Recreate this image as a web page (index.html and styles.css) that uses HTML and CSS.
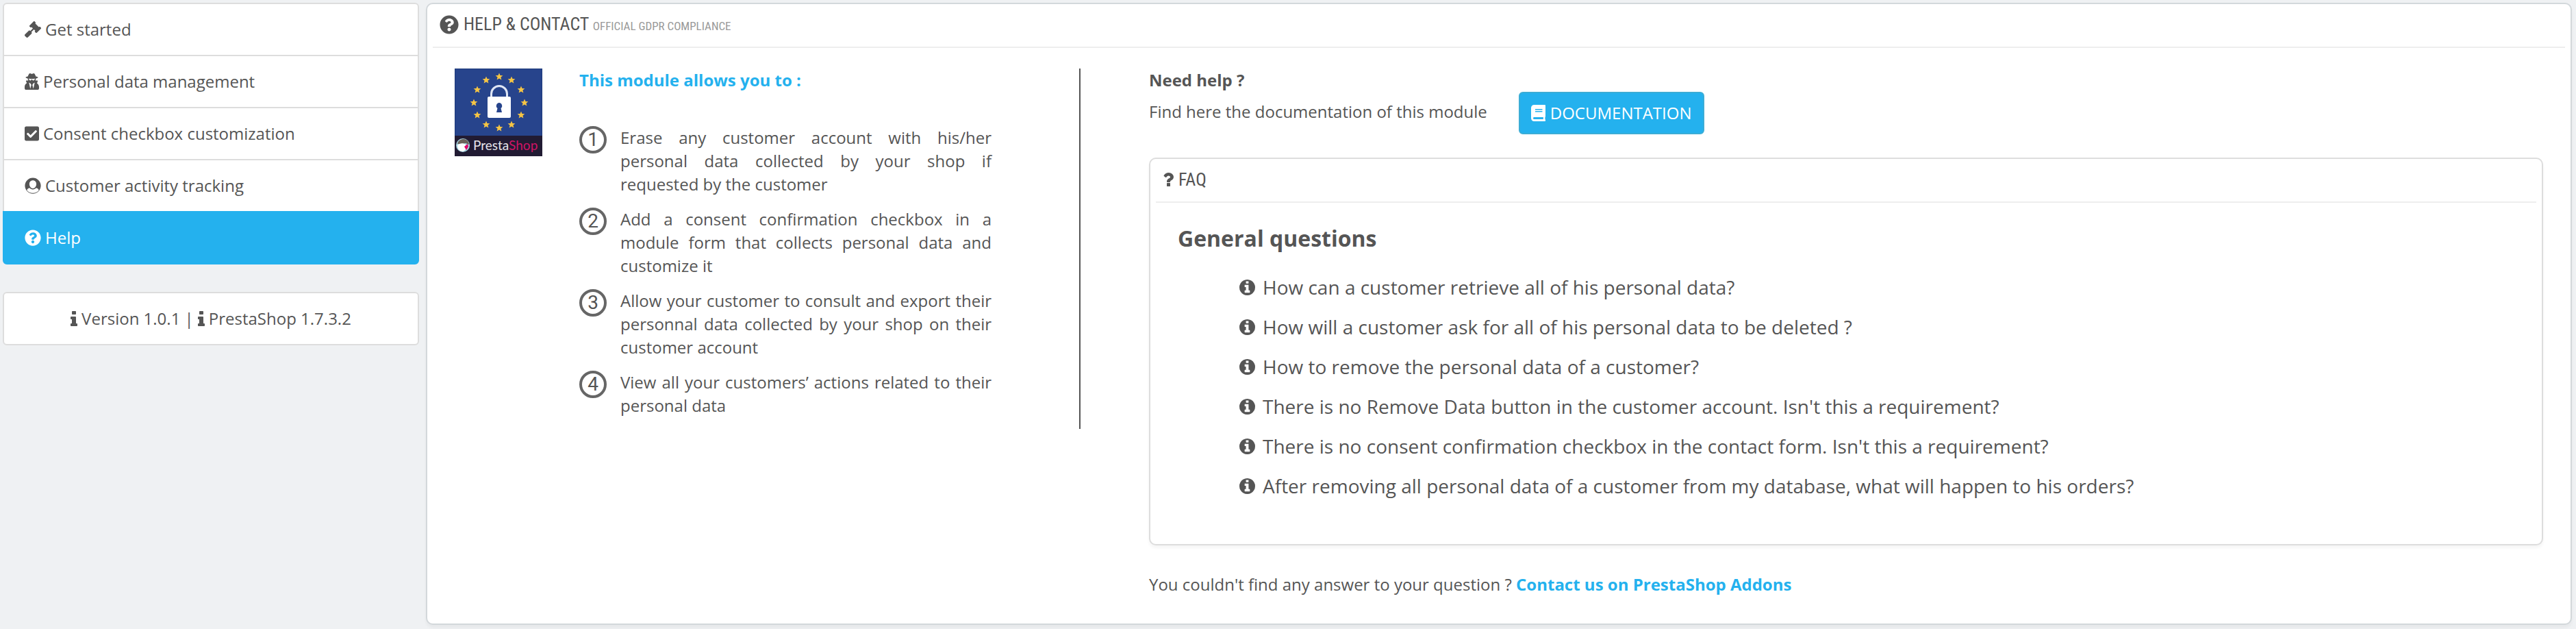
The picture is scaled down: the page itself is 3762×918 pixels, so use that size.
FILE: index.html
```
<!DOCTYPE html>
<html lang="en">
<head>
<meta charset="utf-8">
<title>Help &amp; contact</title>
<link rel="stylesheet" href="styles.css">
</head>
<body>
<svg class="sprite" aria-hidden="true">
  <symbol id="gavel" viewBox="0 0 512 512"><path d="M504.971 199.362l-22.627-22.627c-9.373-9.373-24.569-9.373-33.941 0l-5.657 5.657L329.608 69.255l5.657-5.657c9.373-9.373 9.373-24.569 0-33.941L312.638 7.029c-9.373-9.373-24.569-9.373-33.941 0L154.246 131.48c-9.373 9.373-9.373 24.569 0 33.941l22.627 22.627c9.373 9.373 24.569 9.373 33.941 0l5.657-5.657 39.598 39.598-81.04 81.04-5.657-5.657c-12.497-12.497-32.758-12.497-45.255 0L9.373 412.118c-12.497 12.497-12.497 32.758 0 45.255l45.255 45.255c12.497 12.497 32.758 12.497 45.255 0l114.745-114.745c12.497-12.497 12.497-32.758 0-45.255l-5.657-5.657 81.04-81.04 39.598 39.598-5.657 5.657c-9.373 9.373-9.373 24.569 0 33.941l22.627 22.627c9.373 9.373 24.569 9.373 33.941 0l124.451-124.451c9.372-9.372 9.372-24.568 0-33.941z"/></symbol>
  <symbol id="user-secret" viewBox="0 0 448 512"><path d="M383.9 308.3l23.9-62.6c4-10.5-3.7-21.7-15-21.7h-58.5c11-18.9 17.8-40.6 17.8-64v-.3c39.2-7.8 64-19.1 64-31.7 0-13.3-27.3-25.1-70.1-33-9.2-32.8-27-65.8-40.6-82.8-9.5-11.9-25.9-15.6-39.5-8.8l-27.6 13.8c-9 4.5-19.6 4.5-28.6 0L182.1 3.4c-13.6-6.8-30-3.1-39.5 8.8-13.5 17-31.4 50-40.6 82.8-42.7 7.9-70 19.7-70 33 0 12.6 24.8 23.9 64 31.7v.3c0 23.4 6.8 45.1 17.8 64H56.3c-11.5 0-19.2 11.7-14.7 22.3l25.8 60.2C27.3 329.8 0 372.7 0 422.4v44.8C0 491.9 20.1 512 44.8 512h358.4c24.7 0 44.8-20.1 44.8-44.8v-44.8c0-48.4-25.8-90.4-64.1-114.1zM176 480l-41.6-192 49.6 32 24 40-32 120zm96 0l-32-120 24-40 49.6-32L272 480zm41.7-298.5c-3.9 11.9-7 24.6-16.5 33.4-10.1 9.3-48 22.4-64-25-2.8-8.4-15.4-8.4-18.3 0-17 50.2-56 32.4-64 25-9.5-8.8-12.7-21.5-16.5-33.4-.8-2.5-6.3-5.7-6.3-5.8v-10.8c28.3 3.6 61 5.8 96 5.8s67.7-2.1 96-5.8v10.8c-.1.1-5.6 3.2-6.4 5.8z"/></symbol>
  <symbol id="check-square" viewBox="0 0 448 512"><path d="M400 480H48c-26.51 0-48-21.49-48-48V80c0-26.51 21.49-48 48-48h352c26.51 0 48 21.49 48 48v352c0 26.51-21.49 48-48 48zm-204.686-98.059l184-184c6.248-6.248 6.248-16.379 0-22.627l-22.627-22.627c-6.248-6.248-16.379-6.249-22.628 0L184 302.745l-70.059-70.059c-6.248-6.248-16.379-6.248-22.628 0l-22.627 22.627c-6.248 6.248-6.248 16.379 0 22.627l104 104c6.249 6.25 16.379 6.25 22.628.001z"/></symbol>
  <symbol id="user-circle" viewBox="0 0 24 24"><path fill-rule="evenodd" d="M12 0.5a11.6 11.6 0 1 1 0 23.2a11.6 11.6 0 1 1 0-23.2zM12 4.2c-3 0-5.1 2.1-5.1 5.3 0 3.4 2.2 6.4 5.1 6.4s5.1-3 5.1-6.4c0-3.200-2.100-5.300-5.100-5.300zM7.200 15.200c-2.200.4-3.500 1.500-3.900 3.600 2.100 2.500 5.200 3.900 8.700 3.900s6.600-1.400 8.700-3.900c-.4-2.100-1.700-3.200-3.900-3.600-1.300 1.400-2.900 2.200-4.800 2.200s-3.500-.8-4.800-2.200z"/></symbol>
  <symbol id="question-circle" viewBox="0 0 512 512"><path d="M504 256c0 136.997-111.043 248-248 248S8 392.997 8 256C8 119.083 119.043 8 256 8s248 111.083 248 248zM262.655 90c-54.497 0-89.255 22.957-116.549 63.758-3.536 5.286-2.353 12.415 2.715 16.258l34.699 26.31c5.205 3.947 12.621 3.008 16.665-2.122 17.864-22.658 30.113-35.797 57.303-35.797 20.429 0 45.698 13.148 45.698 32.958 0 14.976-12.363 22.667-32.534 33.976C247.128 238.528 216 254.941 216 296v4c0 6.627 5.373 12 12 12h56c6.627 0 12-5.373 12-12v-1.333c0-28.462 83.186-29.647 83.186-106.667 0-58.002-60.165-102-116.531-102zM256 338c-25.365 0-46 20.635-46 46 0 25.364 20.635 46 46 46s46-20.636 46-46c0-25.365-20.635-46-46-46z"/></symbol>
  <symbol id="book" viewBox="0 0 448 512"><path d="M448 360V24c0-13.300-10.700-24-24-24H96C43 0 0 43 0 96v320c0 53 43 96 96 96h328c13.300 0 24-10.700 24-24v-16c0-7.500-3.500-14.300-8.900-18.700-4.200-15.400-4.200-59.300 0-74.700 5.400-4.300 8.900-11.100 8.900-18.600zM128 134c0-3.300 2.700-6 6-6h212c3.300 0 6 2.700 6 6v20c0 3.300-2.700 6-6 6H134c-3.300 0-6-2.700-6-6v-20zm0 64c0-3.300 2.700-6 6-6h212c3.300 0 6 2.700 6 6v20c0 3.300-2.700 6-6 6H134c-3.300 0-6-2.700-6-6v-20zm253.400 250H96c-17.700 0-32-14.300-32-32 0-17.600 14.400-32 32-32h285.400c-1.900 17.100-1.900 46.900 0 64z"/></symbol>
  <symbol id="info" viewBox="0 128 640 1408"><path d="M640 1344v128q0 26-19 45t-45 19h-512q-26 0-45-19t-19-45v-128q0-26 19-45t45-19h64v-384h-64q-26 0-45-19t-19-45v-128q0-26 19-45t45-19h384q26 0 45 19t19 45v576h64q26 0 45 19t19 45zm-128-1152v192q0 26-19 45t-45 19h-256q-26 0-45-19t-19-45v-192q0-26 19-45t45-19h256q26 0 45 19t19 45z"/></symbol>
  <symbol id="info-circle" viewBox="128 128 1536 1536"><path d="M1152 1376v-160q0-14-9-23t-23-9h-96v-512q0-14-9-23t-23-9h-320q-14 0-23 9t-9 23v160q0 14 9 23t23 9h96v320h-96q-14 0-23 9t-9 23v160q0 14 9 23t23 9h448q14 0 23-9t9-23zm-128-896v-160q0-14-9-23t-23-9h-192q-14 0-23 9t-9 23v160q0 14 9 23t23 9h192q14 0 23-9t9-23zm640 416q0 209-103 385.500t-279.500 279.500-385.500 103-385.500-103-279.500-279.500-103-385.500 103-385.500 279.500-279.500 385.500-103 385.500 103 279.500 279.500 103 385.500z"/></symbol>
  <symbol id="question" viewBox="387 256 1017 1280"><path d="M1088 1256v240q0 16-12 28t-28 12h-240q-16 0-28-12t-12-28v-240q0-16 12-28t28-12h240q16 0 28 12t12 28zm316-600q0 54-15.500 101t-35 76.500-55 59.500-57.500 43.500-61 35.500q-41 23-68.500 65t-27.500 67q0 17-12 32.500t-28 15.500h-240q-15 0-25.500-18.500t-10.500-37.500v-45q0-83 65-156.500t143-108.500q59-27 84-56t25-76q0-42-46.500-74t-107.500-32q-65 0-108 29-35 25-107 115-13 16-31 16-12 0-25-8l-164-125q-13-10-15.500-25t5.500-28q160-266 464-266 80 0 161 31t146 83 106 127.500 41 158.500z"/></symbol>
  <symbol id="star" viewBox="-6 -6 12 12"><path d="M0-5.600L1.500-1.900 5.400-1.700 2.400.8 3.400 4.600 0 2.500-3.400 4.600-2.400.8-5.400-1.700-1.500-1.900z"/></symbol>
</svg>

<div class="layout">
  <aside class="sidebar">
    <nav class="menu">
      <a class="menu-item" href="#"><svg class="icon"><use href="#gavel"/></svg>Get started</a>
      <a class="menu-item" href="#"><svg class="icon icon-narrow"><use href="#user-secret"/></svg>Personal data management</a>
      <a class="menu-item" href="#"><svg class="icon icon-narrow"><use href="#check-square"/></svg>Consent checkbox customization</a>
      <a class="menu-item" href="#"><svg class="icon"><use href="#user-circle"/></svg>Customer activity tracking</a>
      <a class="menu-item active" href="#" aria-current="page"><svg class="icon"><use href="#question-circle"/></svg>Help</a>
    </nav>
    <div class="version">
      <svg class="icon-info"><use href="#info"/></svg><span>Version 1.0.1 |</span>
      <svg class="icon-info"><use href="#info"/></svg><span>PrestaShop 1.7.3.2</span>
    </div>
  </aside>

  <main class="panel">
    <h1 class="panel-heading">
      <svg class="icon-title"><use href="#question-circle"/></svg>
      <span>Help &amp; contact <small>Official GDPR compliance</small></span>
    </h1>
    <div class="content">
      <section class="about">
        <svg class="logo" viewBox="0 0 128 128" role="img" aria-label="PrestaShop GDPR">
          <rect width="128" height="128" fill="#1d3a7c"/>
          <rect x="1" y="1" width="126" height="98" fill="#27448c"/>
          <rect y="98" width="128" height="30" fill="#211b33"/>
          <g fill="#f6c544">
            <use href="#star" x="59" y="6" width="12" height="12"/>
            <use href="#star" x="77" y="11" width="12" height="12"/>
            <use href="#star" x="91" y="25" width="12" height="12"/>
            <use href="#star" x="96" y="44" width="12" height="12"/>
            <use href="#star" x="91" y="62" width="12" height="12"/>
            <use href="#star" x="77" y="76" width="12" height="12"/>
            <use href="#star" x="59" y="81" width="12" height="12"/>
            <use href="#star" x="40" y="76" width="12" height="12"/>
            <use href="#star" x="27" y="62" width="12" height="12"/>
            <use href="#star" x="22" y="44" width="12" height="12"/>
            <use href="#star" x="27" y="25" width="12" height="12"/>
            <use href="#star" x="40" y="11" width="12" height="12"/>
          </g>
          <path d="M53.500 43V37a11.500 11.500 0 0 1 23 0V43" fill="none" stroke="#dfe6f5" stroke-width="3"/>
          <rect x="48" y="41" width="34" height="31" rx="2" fill="#fff"/>
          <path d="M65 50a4.500 4.500 0 0 1 2.500 8l1.500 6h-8l1.500-6a4.500 4.500 0 0 1 2.500-8z" fill="#27448c"/>
          <circle cx="12" cy="112" r="10" fill="#a5d3e0"/>
          <path d="M4 110c1-5 5-7 9-7 5 0 8 4 8 8l-5-2-7 1z" fill="#6b625a"/>
          <path d="M4 112c3-3 8-4 12-1v7c-1 2-3 3-5 3-4 0-7-4-7-9z" fill="#fff"/>
          <path d="M14 114l5-4 1 4-3 5z" fill="#df0067"/>
          <text x="27" y="119" class="logo-text" fill="#e6e4ea">Presta<tspan fill="#cf1465">Shop</tspan></text>
        </svg>
        <div class="features">
          <h2 class="features-title">This module allows you to :</h2>
          <ol class="feature-list">
            <li class="feature"><span class="number">1</span><p>Erase any customer account with his/her personal data collected by your shop if requested by the customer</p></li>
            <li class="feature"><span class="number">2</span><p>Add a consent confirmation checkbox in a module form that collects personal data and customize it</p></li>
            <li class="feature"><span class="number">3</span><p>Allow your customer to consult and export their personnal data collected by your shop on their customer account</p></li>
            <li class="feature"><span class="number">4</span><p>View all your customers’ actions related to their personal data</p></li>
          </ol>
        </div>
      </section>

      <section class="help">
        <div class="intro">
          <div>
            <h2 class="help-title">Need help ?</h2>
            <p class="help-text">Find here the documentation of this module</p>
          </div>
          <a class="button" href="#"><svg class="icon icon-narrow"><use href="#book"/></svg>DOCUMENTATION</a>
        </div>
        <div class="panel faq">
          <h2 class="panel-heading">
            <svg class="icon-question"><use href="#question"/></svg>
            <span>FAQ</span>
          </h2>
          <div class="faq-body">
            <h3 class="faq-title">General questions</h3>
            <ul class="faq-list">
              <li><a class="question" href="#"><svg class="icon-faq"><use href="#info-circle"/></svg>How can a customer retrieve all of his personal data?</a></li>
              <li><a class="question" href="#"><svg class="icon-faq"><use href="#info-circle"/></svg>How will a customer ask for all of his personal data to be deleted ?</a></li>
              <li><a class="question" href="#"><svg class="icon-faq"><use href="#info-circle"/></svg>How to remove the personal data of a customer?</a></li>
              <li><a class="question" href="#"><svg class="icon-faq"><use href="#info-circle"/></svg>There is no Remove Data button in the customer account. Isn't this a requirement?</a></li>
              <li><a class="question" href="#"><svg class="icon-faq"><use href="#info-circle"/></svg>There is no consent confirmation checkbox in the contact form. Isn't this a requirement?</a></li>
              <li><a class="question" href="#"><svg class="icon-faq"><use href="#info-circle"/></svg>After removing all personal data of a customer from my database, what will happen to his orders?</a></li>
            </ul>
          </div>
        </div>
        <p class="contact">You couldn't find any answer to your question ? <a href="#">Contact us on PrestaShop Addons</a></p>
      </section>
    </div>
  </main>
</div>
</body>
</html>
```

FILE: styles.css
```
* {
  box-sizing: border-box;
}

body {
  margin: 0;
  background: #eff1f3;
  color: #555;
  font: 24px/34px "Open Sans", "Noto Sans", sans-serif;
}

h1, h2, h3, p, ol, ul {
  margin: 0;
  padding: 0;
  font-size: inherit;
}

ol, ul {
  list-style: none;
}

a {
  color: inherit;
  text-decoration: none;
}

svg {
  flex: none;
  fill: currentColor;
}

.sprite {
  position: absolute;
  width: 0;
  height: 0;
}

.layout {
  display: grid;
  grid-template-columns: minmax(0, 608fr) minmax(0, 3134fr);
  align-items: start;
  gap: 10px;
  padding: 4px 6px 6px 4px;
}

/* Sidebar */

.menu {
  display: flex;
  flex-direction: column;
  margin-bottom: 40px;
}

.menu-item {
  display: flex;
  align-items: center;
  gap: 6px;
  padding: 20px 30px;
  border: 2px solid #ddd;
  background: #fff;
}

.menu-item + .menu-item {
  margin-top: -2px;
}

.menu-item:first-child {
  border-radius: 6px 6px 0 0;
}

.menu-item:last-child {
  border-radius: 0 0 6px 6px;
}

.menu-item.active {
  border-color: #24b1ee;
  background: #24b1ee;
  color: #fff;
}

.icon {
  width: 24px;
  height: 24px;
}

.icon-narrow {
  width: 21px;
}

.version {
  display: flex;
  align-items: center;
  justify-content: center;
  gap: 6px;
  padding: 20px 30px;
  border: 2px solid #ddd;
  border-radius: 6px;
  background: #fff;
}

.icon-info {
  width: 10px;
  height: 22px;
}

/* Panels */

.panel {
  border: 2px solid #d3d8db;
  border-radius: 10px;
  background: #fff;
  box-shadow: 0 4px 4px rgba(0, 0, 0, 0.04);
}

.panel-heading {
  display: flex;
  align-items: center;
  gap: 7px;
  height: 64px;
  margin: 0 8px;
  padding: 0 10px 2px;
  border-bottom: 2px solid #eee;
  font: 26px/32px "Ubuntu Condensed", "Roboto Condensed", "Open Sans Condensed", Lato, sans-serif;
  text-transform: uppercase;
}

.panel-heading small {
  color: #999;
  font-size: 17px;
}

.icon-title {
  width: 28px;
  height: 28px;
}

.content {
  display: grid;
  grid-template-columns: minmax(0, 914fr) minmax(0, 2036fr);
  align-items: start;
  gap: 100px;
  padding: 30px 40px 40px;
}

/* Module presentation */

.about {
  display: flex;
  align-items: flex-start;
  gap: 54px;
  padding: 0 128px 17px 0;
  border-right: 2px solid #555;
}

.logo {
  width: 128px;
  height: 128px;
}

.logo-text {
  font: 19px Lato, sans-serif;
}

.features {
  flex: 1;
}

.features-title {
  margin-bottom: 50px;
  color: #24b1ee;
}

.feature-list {
  display: grid;
  gap: 17px;
}

.feature {
  display: flex;
  gap: 20px;
  text-align: justify;
}

.number {
  display: flex;
  flex: none;
  align-items: center;
  justify-content: center;
  width: 40px;
  height: 40px;
  border: 4px solid #666;
  border-radius: 50%;
  font: 28px/32px Roboto, sans-serif;
}

/* Help */

.intro {
  display: flex;
  align-items: flex-end;
  gap: 46px;
  margin-bottom: 34px;
}

.help-title {
  margin-bottom: 12px;
}

.help-text {
  margin-bottom: 16px;
}

.button {
  display: flex;
  align-items: center;
  gap: 7px;
  padding: 12px 16px;
  border: 2px solid #3badd6;
  border-radius: 6px;
  background: #24b1ee;
  color: #fff;
}

.faq {
  border-color: #ddd;
}

.icon-question {
  width: 16px;
  height: 20px;
}

.faq-body {
  padding: 29px 40px 65px;
}

.faq-title {
  margin-bottom: 28px;
  font-size: 32px;
  line-height: 46px;
}

.faq-list {
  display: grid;
  gap: 18px;
  padding-left: 90px;
  font-size: 28px;
  line-height: 40px;
}

.question {
  display: flex;
  align-items: center;
  gap: 11px;
}

.icon-faq {
  width: 23px;
  height: 23px;
}

.contact {
  margin-top: 40px;
}

.contact a {
  color: #24b1ee;
  font-weight: 700;
}
```
